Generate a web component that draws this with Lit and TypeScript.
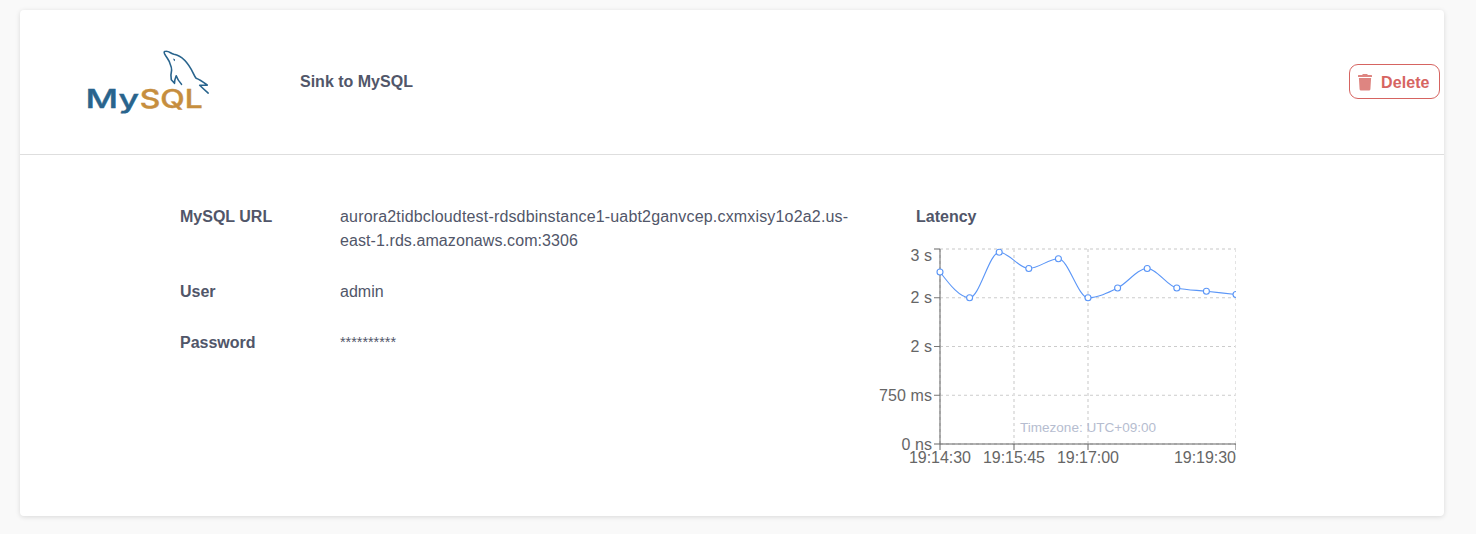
import { LitElement, html, css, svg } from "lit";
import { customElement } from "lit/decorators.js";

const LEFT = 64;
const RIGHT = 360;
const TOP = 9;
const BOTTOM = 204;
const STEP = (RIGHT - LEFT) / 10;

const series = [32, 57.75, 12.25, 28.5, 18.75, 57.75, 48, 28.5, 48, 51.25, 54.5];

const yTicks = [
  { y: 9, label: "3 s", base: 21, w: 21.5, kind: "soft" },
  { y: 57.75, label: "2 s", base: 63.3, w: 21.5, kind: "" },
  { y: 106.5, label: "2 s", base: 112.1, w: 21.5, kind: "" },
  { y: 155.25, label: "750 ms", base: 160.9, w: 53, kind: "" },
  { y: 204, label: "0 ns", base: 209.6, w: 30.5, kind: "soft" },
];

const xTicks = [
  { x: 64, label: "19:14:30", anchor: "middle", at: 64 },
  { x: 138, label: "19:15:45", anchor: "middle", at: 138 },
  { x: 212, label: "19:17:00", anchor: "middle", at: 212 },
  { x: 360, label: "19:19:30", anchor: "end", at: 360 },
];

// Monotone cubic interpolation with equally spaced x values.
function monotone(ys: number[]): string {
  const n = ys.length;
  const s = ys.slice(1).map((y, i) => (y - ys[i]) / STEP);
  const m: number[] = new Array(n).fill(0);
  for (let i = 1; i < n - 1; i++) {
    const a = s[i - 1];
    const b = s[i];
    m[i] = (Math.sign(a) + Math.sign(b)) * Math.min(Math.abs(a), Math.abs(b), 0.25 * Math.abs(a + b));
  }
  m[0] = (3 * s[0] - m[1]) / 2;
  m[n - 1] = (3 * s[n - 2] - m[n - 2]) / 2;
  let d = `M${LEFT},${ys[0]}`;
  for (let i = 0; i < n - 1; i++) {
    const x = LEFT + i * STEP;
    const t = STEP / 3;
    d += `C${x + t},${ys[i] + m[i] * t},${x + STEP - t},${ys[i + 1] - m[i + 1] * t},${x + STEP},${ys[i + 1]}`;
  }
  return d;
}

@customElement("latency-chart")
export class LatencyChart extends LitElement {
  static styles = css`
    :host { display: block; }
    .chart { display: block; overflow: hidden; }
    .grid { stroke: #ccc; stroke-dasharray: 3 3; }
    .grid.soft { stroke: #e3e3e3; stroke-width: 2; }
    .axis { stroke: #777; }
    .axis.soft { stroke: #666; stroke-opacity: 0.5; stroke-width: 2; }
    .tick { fill: #666; font-size: 16px; }
    .zone { fill: #b6bdd0; font-size: 13px; }
    .curve { fill: none; stroke: #5b96f7; stroke-width: 1.1; }
    .dot { fill: #fff; stroke: #5b96f7; stroke-width: 1.1; }
  `;

  render() {
    return html`
      <svg class="chart" width="360" height="230" viewBox="0 0 360 230">
        ${yTicks.map((t) => svg`<line class="grid ${t.kind}" x1=${LEFT} x2=${RIGHT} y1=${t.y} y2=${t.y} />`)}
        ${xTicks.map((t) => svg`<line class="grid soft" x1=${t.x} x2=${t.x} y1=${TOP} y2=${BOTTOM} />`)}
        <line class="axis soft" x1=${LEFT} x2=${RIGHT} y1=${BOTTOM} y2=${BOTTOM} />
        <line class="axis soft" x1=${LEFT} x2=${LEFT} y1=${TOP} y2=${BOTTOM} />
        ${xTicks.map(
          (t) => svg`<line class="axis soft" x1=${t.x} x2=${t.x} y1=${BOTTOM} y2=${BOTTOM + 6} />
            <text class="tick" x=${t.at} y="223" text-anchor=${t.anchor} textLength="62">${t.label}</text>`
        )}
        ${yTicks.map(
          (t) => svg`<line class="axis ${t.kind}" x1=${LEFT - 6} x2=${LEFT} y1=${t.y} y2=${t.y} />
            <text class="tick" x="56" y=${t.base} text-anchor="end" textLength=${t.w}>${t.label}</text>`
        )}
        <text class="zone" x="144" y="192" textLength="136" lengthAdjust="spacingAndGlyphs">Timezone: UTC+09:00</text>
        <path class="curve" d=${monotone(series)} />
        ${series.map((y, i) => svg`<circle class="dot" cx=${LEFT + i * STEP} cy=${y} r="3" />`)}
      </svg>
    `;
  }
}

@customElement("app-root")
export class AppRoot extends LitElement {
  static styles = css`
    :host {
      display: block;
      box-sizing: border-box;
      height: 534px;
      padding: 10px 32px 18px 20px;
      overflow: hidden;
      background: #f9f9f9;
      color: #515669;
      font: 16px/24px "Liberation Sans", Arial, sans-serif;
    }
    .card {
      box-sizing: border-box;
      height: 506px;
      background: #fff;
      border-radius: 4px;
      box-shadow: 0 1px 5px rgba(0, 0, 0, 0.13);
    }
    .head {
      box-sizing: border-box;
      height: 145px;
      display: flex;
      align-items: center;
      padding: 0 4px 0 60px;
      border-bottom: 1px solid #dedede;
    }
    .logo { display: block; width: 140px; height: 85px; margin-top: 1px; }
    .title { margin-left: 80px; font-weight: 700; }
    .delete {
      box-sizing: border-box;
      display: flex;
      align-items: center;
      width: 91px;
      height: 35px;
      margin: 0 0 1px auto;
      padding: 1px 0 0 8px;
      gap: 9px;
      border: 1px solid #d66461;
      border-radius: 9px;
      background: #fff;
      color: #d66461;
      font: 700 16px/24px "Liberation Sans", Arial, sans-serif;
      letter-spacing: 0.1px;
    }
    .bin { display: block; fill: #de8581; }
    .delete-label { padding-top: 2px; }
    .body { display: flex; padding: 50px 0 0 160px; }
    .fields {
      display: grid;
      grid-template-columns: 160px 520px;
      row-gap: 27px;
      align-content: start;
      width: 696px;
      margin: 0;
    }
    .name { font-weight: 700; }
    .value { margin: 0; }
    .url-start { letter-spacing: 0.17px; }
    .url-end { letter-spacing: 0.08px; }
    .secret { font-size: 14.4px; line-height: 23px; }
    .latency-title { padding-left: 40px; font-weight: 700; }
    .plot { margin-top: 11px; }
    .wordmark { font: 500 25.6px Inter, sans-serif; }
    .my { fill: #29648d; stroke: #29648d; stroke-width: 0.4; }
    .sql { fill: #c68e3e; stroke: #c68e3e; stroke-width: 0.4; }
    .dolphin { fill: none; stroke: #29648d; stroke-width: 1.6; stroke-linejoin: round; stroke-linecap: round; }
    .eye { fill: #29648d; }
  `;

  render() {
    return html`
      <section class="card">
        <header class="head">
          <svg class="logo" viewBox="0 0 140 85" role="img" aria-label="MySQL">
            <g class="wordmark">
              <text class="my" x="5.6" y="68" textLength="53.4" lengthAdjust="spacingAndGlyphs">My</text>
              <text class="sql" x="59.7" y="68" textLength="63" lengthAdjust="spacingAndGlyphs">SQL</text>
            </g>
            <path
              class="dolphin"
              d="M94.5 43.3L91.3 39.7Q90.3 35.5 91.6 30.2Q91.8 27.7 90.3 24.5C89.7 20.5 87.1 18.6 84.6 13.8Q83.4 11.3 85.7 11.3C89.7 11.1 90.3 13.4 94 14.3C102.7 16 109.3 25 113.3 33.4Q114.8 36.7 116.1 38.2C120 39.5 123.6 42.3 127.3 45.1Q123.3 45.3 119.7 45.3Q123.2 48.8 128.2 53.1M94.5 43.3Q94.4 40.3 96.2 35.8Q97.7 40.2 101.5 44.3"
            />
            <path class="eye" d="M93 18.4L95 19.2L94.8 21.2L93.8 20.6Z" />
          </svg>
          <span class="title">Sink to MySQL</span>
          <button class="delete">
            <svg class="bin" width="14" height="17" viewBox="0 0 14 17">
              <path d="M0 1.6Q0 1 0.6 1H4.2L4.8 0H9.2L9.8 1H13.4Q14 1 14 1.6V3H0ZM0.9 4H13.1L12.4 15.2Q12.3 16.5 11 16.5H3Q1.7 16.5 1.6 15.2Z" />
            </svg>
            <span class="delete-label">Delete</span>
          </button>
        </header>
        <div class="body">
          <dl class="fields">
            <dt class="name">MySQL URL</dt>
            <dd class="value">
              <span class="url-start">aurora2tidbcloudtest-rdsdbinstance1-uabt2ganvcep.cxmxisy1o2a2.us-</span><br /><span class="url-end">east-1.rds.amazonaws.com:3306</span>
            </dd>
            <dt class="name">User</dt>
            <dd class="value">admin</dd>
            <dt class="name">Password</dt>
            <dd class="value secret">**********</dd>
          </dl>
          <div>
            <div class="latency-title">Latency</div>
            <latency-chart class="plot"></latency-chart>
          </div>
        </div>
      </section>
    `;
  }
}
